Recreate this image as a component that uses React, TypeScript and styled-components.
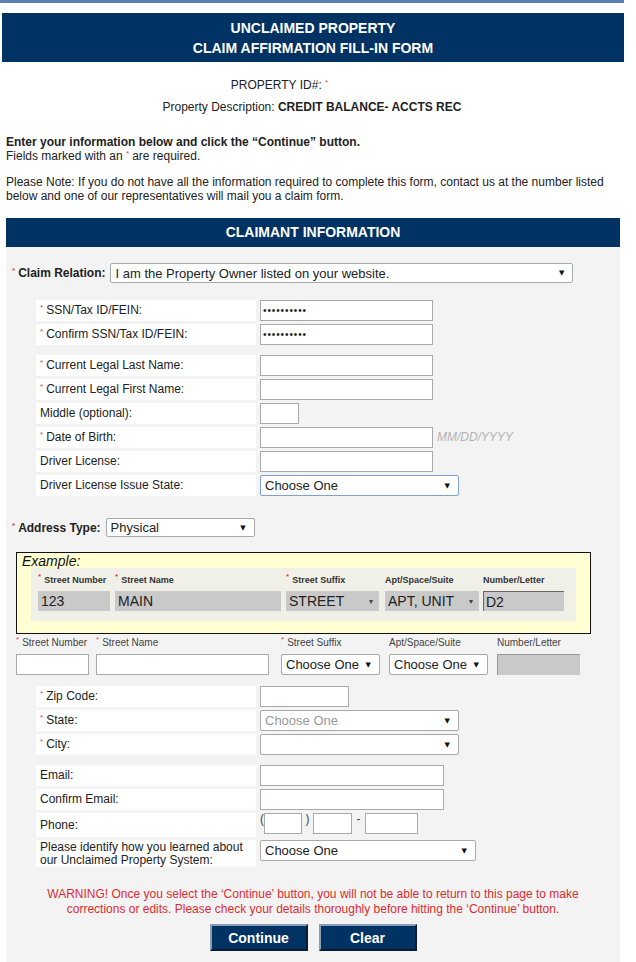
import React from 'react';
import styled, { createGlobalStyle } from 'styled-components';

const GlobalStyle = createGlobalStyle`
  body {
    margin: 0;
    background: #fff;
    font-family: "Liberation Sans", Arial, sans-serif;
    font-size: 12px;
    color: #222;
  }
`;

const Page = styled.div`
  width: 624px;
`;

const TopRule = styled.div`
  height: 3px;
  background: #5b7fb1;
`;

const Banner = styled.div`
  margin: 10px 0 0 2px;
  height: 49px;
  background: #003264;
  color: #fff;
  display: flex;
  flex-direction: column;
  align-items: center;
  justify-content: center;
  font-weight: bold;
  font-size: 14px;
  line-height: 20px;
`;

const Meta = styled.div`
  margin-top: 12px;
  text-align: center;
  line-height: 22px;
`;

const MetaLine = styled.div<{ $shift?: number }>`
  padding-right: ${(p) => p.$shift || 0}px;
`;

const Intro = styled.div`
  margin-top: 17px;
  padding-left: 6px;
  line-height: 14px;
`;

const Para = styled.p<{ $bold?: boolean }>`
  margin: 0 0 12px;
  font-weight: ${(p) => (p.$bold ? 'bold' : 'normal')};
  &:last-child {
    margin-bottom: 0;
  }
`;

const SectionBar = styled.div`
  margin: 15px 0 0 6px;
  width: 614px;
  height: 29px;
  line-height: 29px;
  background: #003264;
  color: #fff;
  font-weight: bold;
  font-size: 14px;
  text-align: center;
`;

const Panel = styled.div`
  margin-left: 6px;
  width: 614px;
  box-sizing: border-box;
  background: #f3f3f3;
  padding: 16px 0 14px 6px;
`;

const Req = styled.span`
  color: #e0444a;
  font-size: 8px;
  line-height: 0;
  vertical-align: 4px;
  margin-right: 3px;
`;

const InlineRow = styled.div<{ $top?: number; $h: number }>`
  display: flex;
  align-items: center;
  gap: 5px;
  height: ${(p) => p.$h}px;
  margin-top: ${(p) => p.$top || 0}px;
`;

const InlineLabel = styled.span`
  font-weight: bold;
  color: #222;
`;

const SelectBox = styled.div<{
  $w: number;
  $h?: number;
  $muted?: boolean;
  $focus?: boolean;
}>`
  width: ${(p) => p.$w}px;
  height: ${(p) => p.$h || 21}px;
  box-sizing: border-box;
  display: flex;
  align-items: center;
  justify-content: space-between;
  padding: 0 8px 0 4px;
  background: #fff;
  border: 1px solid ${(p) => (p.$focus ? '#7ea0d2' : '#a9a9a9')};
  border-radius: 2px;
  font-size: 13px;
  color: ${(p) => (p.$muted ? '#999' : '#222')};
  white-space: nowrap;
  overflow: hidden;
`;

const Arrow = styled.span<{ $soft?: boolean }>`
  font-family: "DejaVu Sans", sans-serif;
  font-size: ${(p) => (p.$soft ? 8 : 7)}px;
  color: ${(p) => (p.$soft ? '#444' : '#111')};
  flex: none;
  margin-left: 4px;
`;

const FieldGrid = styled.div<{ $top: number }>`
  margin: ${(p) => p.$top}px 0 0 24px;
  display: grid;
  grid-template-columns: 220px auto;
  column-gap: 4px;
  row-gap: 3px;
  align-items: start;
`;

const LabelCell = styled.div<{ $h?: number }>`
  height: ${(p) => p.$h || 21}px;
  background: #fff;
  display: flex;
  align-items: center;
  padding-left: 4px;
  line-height: 13px;
  color: #222;
`;

const FieldCell = styled.div`
  display: flex;
  align-items: flex-start;
  gap: 4px;
`;

const TextBox = styled.input<{ $w: number; $dots?: boolean }>`
  width: ${(p) => p.$w}px;
  height: 21px;
  box-sizing: border-box;
  margin: 0;
  padding: 0 ${(p) => (p.$dots ? 2 : 3)}px;
  border: 1px solid #a9a9a9;
  background: #fff;
  font-family: "Liberation Sans", Arial, sans-serif;
  font-size: ${(p) => (p.$dots ? 10 : 12)}px;
  letter-spacing: ${(p) => (p.$dots ? 0.9 : 0)}px;
  color: #222;
  outline: none;
`;

const Hint = styled.span`
  font-style: italic;
  color: #b3b3b3;
  line-height: 21px;
`;

const Punct = styled.span<{ $w: number }>`
  width: ${(p) => p.$w}px;
  text-align: center;
  line-height: 12px;
  color: #444;
  flex: none;
`;

const PhoneWrap = styled.div`
  display: flex;
  align-items: flex-start;
`;

const ExampleBox = styled.div`
  margin: 15px 0 0 4px;
  width: 575px;
  height: 82px;
  box-sizing: border-box;
  border: 1px solid #111;
  background: #ffffd3;
  padding: 2px 14px 0 14px;
`;

const ExampleTitle = styled.div`
  font-style: italic;
  font-size: 14px;
  line-height: 13px;
  margin-left: -9px;
  color: #111;
`;

const ExampleInner = styled.div`
  background: #f0f0e9;
  height: 53px;
  box-sizing: border-box;
  padding: 6px 0 0 7px;
`;

const AddrRow = styled.div<{ $top?: number; $indent?: number }>`
  display: flex;
  margin-top: ${(p) => p.$top || 0}px;
  padding-left: ${(p) => p.$indent || 0}px;
`;

const AddrCol = styled.div<{ $w: number }>`
  width: ${(p) => p.$w}px;
  flex: none;
  display: flex;
  flex-direction: column;
`;

const SmallLabel = styled.div<{ $strong?: boolean }>`
  font-size: ${(p) => (p.$strong ? 9 : 10)}px;
  font-weight: ${(p) => (p.$strong ? 'bold' : 'normal')};
  color: ${(p) => (p.$strong ? '#333' : '#444')};
  line-height: 12px;
  height: 12px;
  margin-bottom: 5px;
  white-space: nowrap;
`;

const SampleField = styled.div<{ $w: number; $inset?: boolean }>`
  width: ${(p) => p.$w}px;
  height: 20px;
  box-sizing: border-box;
  background: #c9c9c9;
  display: flex;
  align-items: center;
  justify-content: space-between;
  padding: 0 6px 0 ${(p) => (p.$inset ? 2 : 3)}px;
  font-size: 14px;
  color: #222;
  border-top: ${(p) => (p.$inset ? '1px solid #666' : 'none')};
  border-left: ${(p) => (p.$inset ? '1px solid #666' : 'none')};
`;

const LockedBox = styled.div<{ $w: number }>`
  width: ${(p) => p.$w}px;
  height: 21px;
  box-sizing: border-box;
  background: #c9c9c9;
  border-top: 1px solid #999;
  border-left: 1px solid #999;
`;

const Warning = styled.div`
  margin-top: 20px;
  text-align: center;
  color: #de2b30;
  line-height: 15px;
  padding-right: 6px;
`;

const ButtonRow = styled.div`
  margin-top: 7px;
  display: flex;
  justify-content: center;
  gap: 11px;
  padding-right: 6px;
`;

const Button = styled.button`
  width: 98px;
  height: 27px;
  box-sizing: border-box;
  margin: 0;
  background: #003264;
  color: #fff;
  font-family: "Liberation Sans", Arial, sans-serif;
  font-weight: bold;
  font-size: 14px;
  border: 2px solid;
  border-color: #8b9db3 #0b1c30 #0b1c30 #8b9db3;
  cursor: pointer;
`;

type Row = {
  label: string;
  req?: boolean;
  h?: number;
  field: React.ReactNode;
};

const Fields = ({ top, rows }: { top: number; rows: Row[] }) => (
  <FieldGrid $top={top}>
    {rows.map((r) => (
      <React.Fragment key={r.label}>
        <LabelCell $h={r.h}>
          <span>
            {r.req && <Req>*</Req>}
            {r.label}
          </span>
        </LabelCell>
        <FieldCell>{r.field}</FieldCell>
      </React.Fragment>
    ))}
  </FieldGrid>
);

const Select = ({
  w,
  text,
  muted,
  focus,
  h,
}: {
  w: number;
  text?: string;
  muted?: boolean;
  focus?: boolean;
  h?: number;
}) => (
  <SelectBox $w={w} $h={h} $muted={muted} $focus={focus}>
    <span>{text}</span>
    <Arrow>▼</Arrow>
  </SelectBox>
);

const identityRows: Row[] = [
  { label: 'SSN/Tax ID/FEIN:', req: true, field: <TextBox $w={173} $dots defaultValue="••••••••••" /> },
  { label: 'Confirm SSN/Tax ID/FEIN:', req: true, field: <TextBox $w={173} $dots defaultValue="••••••••••" /> },
];

const nameRows: Row[] = [
  { label: 'Current Legal Last Name:', req: true, field: <TextBox $w={173} /> },
  { label: 'Current Legal First Name:', req: true, field: <TextBox $w={173} /> },
  { label: 'Middle (optional):', field: <TextBox $w={39} /> },
  {
    label: 'Date of Birth:',
    req: true,
    field: (
      <>
        <TextBox $w={173} />
        <Hint>MM/DD/YYYY</Hint>
      </>
    ),
  },
  { label: 'Driver License:', field: <TextBox $w={173} /> },
  { label: 'Driver License Issue State:', field: <Select w={199} text="Choose One" focus /> },
];

const placeRows: Row[] = [
  { label: 'Zip Code:', req: true, field: <TextBox $w={89} /> },
  { label: 'State:', req: true, field: <Select w={199} text="Choose One" muted /> },
  { label: 'City:', req: true, field: <Select w={199} /> },
];

const contactRows: Row[] = [
  { label: 'Email:', field: <TextBox $w={184} /> },
  { label: 'Confirm Email:', field: <TextBox $w={184} /> },
  {
    label: 'Phone:',
    h: 24,
    field: (
      <PhoneWrap>
        <Punct $w={4}>(</Punct>
        <TextBox $w={38} />
        <Punct $w={11}>)</Punct>
        <TextBox $w={39} />
        <Punct $w={13}>-</Punct>
        <TextBox $w={53} />
      </PhoneWrap>
    ),
  },
  {
    label: 'Please identify how you learned about our Unclaimed Property System:',
    h: 27,
    field: <Select w={216} text="Choose One" />,
  },
];

const App = () => {
  return (
    <Page>
      <GlobalStyle />
      <TopRule />
      <Banner>
        <div>UNCLAIMED PROPERTY</div>
        <div>CLAIM AFFIRMATION FILL-IN FORM</div>
      </Banner>

      <Meta>
        <MetaLine $shift={62}>
          PROPERTY ID#: <Req>*</Req>
        </MetaLine>
        <MetaLine>
          Property Description: <b>CREDIT BALANCE- ACCTS REC</b>
        </MetaLine>
      </Meta>

      <Intro>
        <Para $bold>
          Enter your information below and click the “Continue” button.
          <br />
          <span style={{ fontWeight: 'normal' }}>
            Fields marked with an <Req>*</Req>are required.
          </span>
        </Para>
        <Para>
          Please Note: If you do not have all the information required to complete this form, contact us at
          the number listed below and one of our representatives will mail you a claim form.
        </Para>
      </Intro>

      <SectionBar>CLAIMANT INFORMATION</SectionBar>

      <Panel>
        <InlineRow $h={20}>
          <InlineLabel>
            <Req>*</Req>Claim Relation:
          </InlineLabel>
          <Select w={463} h={20} text="I am the Property Owner listed on your website." />
        </InlineRow>

        <Fields top={17} rows={identityRows} />
        <Fields top={10} rows={nameRows} />

        <InlineRow $top={22} $h={19}>
          <InlineLabel>
            <Req>*</Req>Address Type:
          </InlineLabel>
          <Select w={149} h={19} text="Physical" />
        </InlineRow>

        <ExampleBox>
          <ExampleTitle>Example:</ExampleTitle>
          <ExampleInner>
            <AddrRow>
              <AddrCol $w={77}>
                <SmallLabel $strong>
                  <Req>*</Req>Street Number
                </SmallLabel>
                <SampleField $w={72}>123</SampleField>
              </AddrCol>
              <AddrCol $w={171}>
                <SmallLabel $strong>
                  <Req>*</Req>Street Name
                </SmallLabel>
                <SampleField $w={166}>MAIN</SampleField>
              </AddrCol>
              <AddrCol $w={99}>
                <SmallLabel $strong>
                  <Req>*</Req>Street Suffix
                </SmallLabel>
                <SampleField $w={93}>
                  STREET<Arrow $soft>▾</Arrow>
                </SampleField>
              </AddrCol>
              <AddrCol $w={98}>
                <SmallLabel $strong>Apt/Space/Suite</SmallLabel>
                <SampleField $w={94}>
                  APT, UNIT<Arrow $soft>▾</Arrow>
                </SampleField>
              </AddrCol>
              <AddrCol $w={81}>
                <SmallLabel $strong>Number/Letter</SmallLabel>
                <SampleField $w={81} $inset>
                  D2
                </SampleField>
              </AddrCol>
            </AddrRow>
          </ExampleInner>
        </ExampleBox>

        <AddrRow $top={3} $indent={4}>
          <AddrCol $w={80}>
            <SmallLabel>
              <Req>*</Req>Street Number
            </SmallLabel>
            <TextBox $w={73} />
          </AddrCol>
          <AddrCol $w={185}>
            <SmallLabel>
              <Req>*</Req>Street Name
            </SmallLabel>
            <TextBox $w={173} />
          </AddrCol>
          <AddrCol $w={108}>
            <SmallLabel>
              <Req>*</Req>Street Suffix
            </SmallLabel>
            <Select w={99} text="Choose One" />
          </AddrCol>
          <AddrCol $w={108}>
            <SmallLabel>Apt/Space/Suite</SmallLabel>
            <Select w={99} text="Choose One" />
          </AddrCol>
          <AddrCol $w={83}>
            <SmallLabel>Number/Letter</SmallLabel>
            <LockedBox $w={83} />
          </AddrCol>
        </AddrRow>

        <Fields top={11} rows={placeRows} />
        <Fields top={10} rows={contactRows} />

        <Warning>
          WARNING! Once you select the ‘Continue’ button, you will not be able to return to this page to make
          <br />
          corrections or edits. Please check your details thoroughly before hitting the ‘Continue’ button.
        </Warning>

        <ButtonRow>
          <Button>Continue</Button>
          <Button>Clear</Button>
        </ButtonRow>
      </Panel>
    </Page>
  );
};

export default App;
